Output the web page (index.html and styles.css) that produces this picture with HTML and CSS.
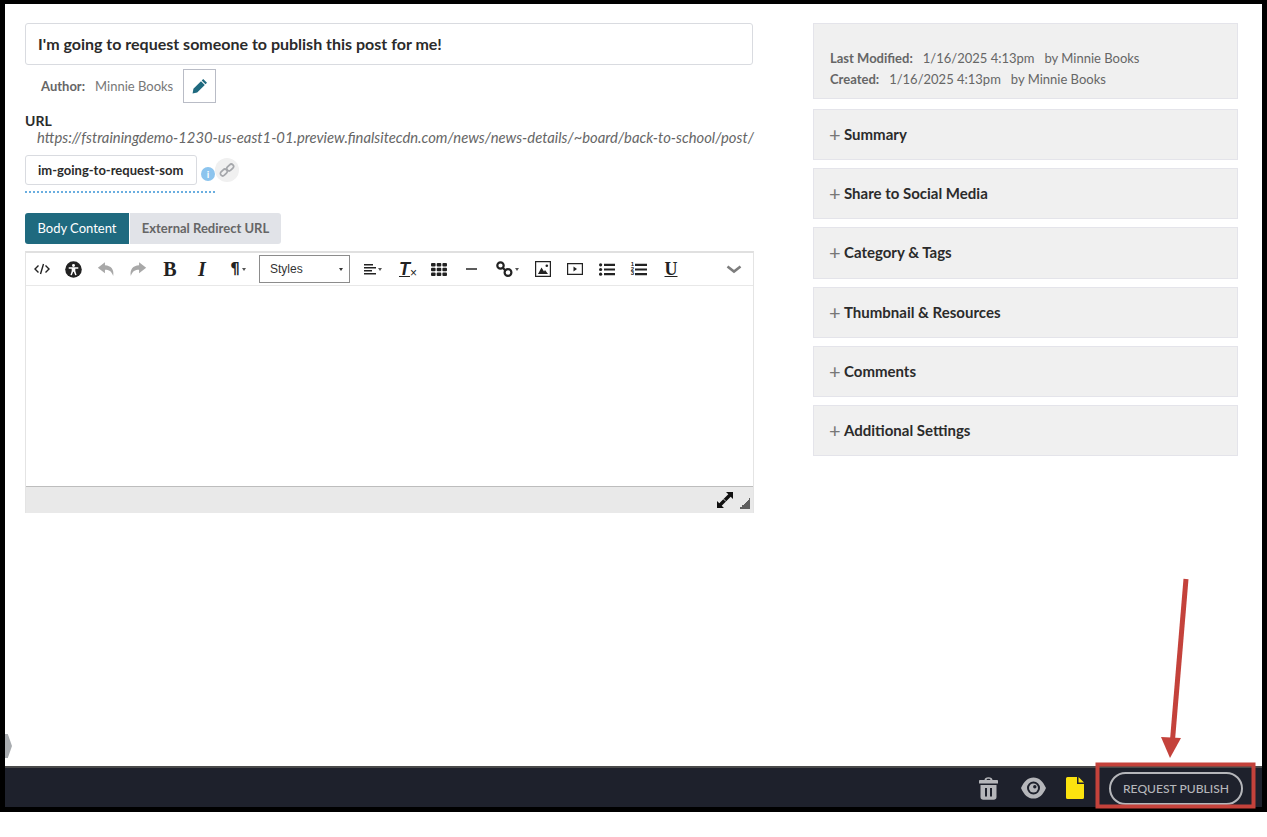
FILE: index.html
```html
<!DOCTYPE html>
<html lang="en">
<head>
<meta charset="utf-8">
<title>Post editor</title>
<link rel="stylesheet" href="styles.css">
</head>
<body>
<div class="frame">
  <main class="content">
    <section class="left">
      <div class="title-box">I'm going to request someone to publish this post for me!</div>
      <div class="author-row">
        <span class="author-label">Author:</span>
        <span class="author-name">Minnie Books</span>
        <button class="pencil-btn" aria-label="Edit author">
          <svg width="16" height="16" viewBox="0 0 16 16"><path fill="#1f6a7f" d="M11.2 1l3.800 3.800-1.500 1.500-3.800-3.800zM9 3.200l3.800 3.800-7.600 7.600L.6 15.400l.8-4.600z"/></svg>
        </button>
      </div>
      <div class="url-label">URL</div>
      <div class="url-text">https://fstrainingdemo-1230-us-east1-01.preview.finalsitecdn.com/news/news-details/~board/back-to-school/post/</div>
      <div class="slug-row">
        <div class="slug-box">im-going-to-request-som</div>
        <span class="info-dot">i</span>
        <span class="link-dot">
          <svg width="16" height="16" viewBox="0 0 16 16" fill="none" stroke="#a5a7ab" stroke-width="1.700"><rect x="1" y="8.200" width="7.600" height="4.600" rx="2.300" transform="rotate(-45 4.800 10.500)"/><rect x="7.400" y="3.200" width="7.600" height="4.600" rx="2.300" transform="rotate(-45 11.200 5.500)"/></svg>
        </span>
      </div>
      <div class="dotted"></div>
      <div class="tabs">
        <div class="tab tab-active">Body Content</div>
        <div class="tab tab-idle">External Redirect URL</div>
      </div>
      <div class="editor">
        <div class="toolbar">
          <span class="tool"><svg width="16" height="12" viewBox="0 0 16 12" fill="none" stroke="#222" stroke-width="1.400"><path d="M4.500 2.500L1 6l3.500 3.500M11.500 2.500L15 6l-3.500 3.500M9.500 1L6.500 11"/></svg></span>
          <span class="tool tool-a11y"><svg width="17" height="17" viewBox="0 0 16 16"><circle cx="8" cy="8" r="7.800" fill="#222"/><circle cx="8" cy="4.200" r="1.400" fill="#fff"/><path fill="#fff" d="M3.500 5.900h9v1.400H9.700v2.200l1.200 3.600-1.300.4L8.300 10h-.6l-1.300 3.500-1.300-.4 1.200-3.600V7.300H3.500z"/></svg></span>
          <span class="tool"><svg width="18" height="16" viewBox="0 0 17 14"><path fill="#a8a8a8" d="M7.500 .6L.8 5.800l6.700 5.200V7.800c4 0 6 1.200 7.800 5.800 1.200-6-2-10-7.800-10.200z"/></svg></span>
          <span class="tool"><svg width="18" height="16" viewBox="0 0 17 14"><path fill="#a8a8a8" d="M9.500 .6l6.700 5.200L9.500 11V7.800c-4 0-6 1.200-7.800 5.800C.5 7.600 3.700 3.600 9.500 3.400z"/></svg></span>
          <span class="tool glyph-b">B</span>
          <span class="tool glyph-i">I</span>
          <span class="tool tool-wide glyph-p">¶<i class="caret"></i></span>
          <div class="styles-select"><span>Styles</span><i class="caret caret-dark"></i></div>
          <span class="tool tool-align"><svg width="12" height="11" viewBox="0 0 12 11" fill="#222"><path d="M0 0h9v1.500H0zM0 3h12v1.500H0zM0 6h8v1.500H0zM0 9h12v1.500H0z"/></svg><i class="caret"></i></span>
          <span class="tool glyph-tx"><span class="tx-t">T</span><span class="tx-x">×</span></span>
          <span class="tool"><svg width="16" height="13" viewBox="0 0 16 13" fill="#222"><rect width="4.600" height="3.600" rx="1"/><rect x="5.700" width="4.600" height="3.600" rx="1"/><rect x="11.400" width="4.600" height="3.600" rx="1"/><rect y="4.700" width="4.600" height="3.600" rx="1"/><rect x="5.700" y="4.700" width="4.600" height="3.600" rx="1"/><rect x="11.400" y="4.700" width="4.600" height="3.600" rx="1"/><rect y="9.400" width="4.600" height="3.600" rx="1"/><rect x="5.700" y="9.400" width="4.600" height="3.600" rx="1"/><rect x="11.400" y="9.400" width="4.600" height="3.600" rx="1"/></svg></span>
          <span class="tool"><svg width="11" height="2" viewBox="0 0 11 2"><path fill="#333" d="M0 .2h11v1.600H0z"/></svg></span>
          <span class="tool tool-link"><svg width="17" height="16" viewBox="0 0 17 16" fill="none" stroke="#222" stroke-width="2.200"><circle cx="4.500" cy="4.500" r="3.200"/><circle cx="12" cy="11.500" r="3.400"/><path d="M6.500 6.500l3.500 3.500"/></svg><i class="caret"></i></span>
          <span class="tool"><svg width="16" height="16" viewBox="0 0 16 16"><path fill="#222" fill-rule="evenodd" d="M0 0h16v16H0zM1.200 1.200v13.600h13.600V1.200z"/><path fill="#222" d="M3 13l3.500-6.500L9 10.500l1-1.500 3 4z"/><circle cx="11.800" cy="4.800" r="1.300" fill="#222"/></svg></span>
          <span class="tool"><svg width="16" height="12" viewBox="0 0 16 12"><path fill="#222" fill-rule="evenodd" d="M0 0h16v12H0zM1.200 1.200v9.600h13.600V1.200z"/><path fill="#222" d="M6.500 3.500L10 6l-3.500 2.500z"/></svg></span>
          <span class="tool"><svg width="16" height="13" viewBox="0 0 16 13" fill="#222"><circle cx="1.600" cy="1.800" r="1.600"/><circle cx="1.600" cy="6.500" r="1.600"/><circle cx="1.600" cy="11.200" r="1.600"/><path d="M5 .7h11v2.200H5zM5 5.400h11v2.200H5zM5 10.100h11v2.200H5z"/></svg></span>
          <span class="tool ol-tool"><span class="ol-nums">1<br>2<br>3</span><svg width="12" height="13" viewBox="0 0 12 13" fill="#222"><path d="M0 .7h12v2.200H0zM0 5.400h12v2.200H0zM0 10.100h12v2.200H0z"/></svg></span>
          <span class="tool glyph-u">U</span>
          <span class="tool tool-end"><svg width="16" height="9" viewBox="0 0 16 9"><path fill="none" stroke="#7d7d7d" stroke-width="2.600" d="M1.500 1.500L8 6.500l6.500-5"/></svg></span>
        </div>
        <div class="editor-body"></div>
        <div class="statusbar">
          <svg class="expand" width="16" height="16" viewBox="0 0 16 16"><path fill="#111" d="M9 0h7v7l-2.300-2.300-9 9L7 16H0V9l2.300 2.300 9-9z"/><path stroke="#e9e9e9" stroke-width=".8" d="M6.500 7l2.500 2.500"/></svg>
          <i class="grip"></i>
        </div>
      </div>
    </section>
    <aside class="right">
      <div class="meta-panel">
        <div class="meta-line"><b>Last Modified:</b><span>1/16/2025 4:13pm</span><span>by Minnie Books</span></div>
        <div class="meta-line"><b>Created:</b><span>1/16/2025 4:13pm</span><span>by Minnie Books</span></div>
      </div>
      <div class="panel"><span class="plus">+</span>Summary</div>
      <div class="panel"><span class="plus">+</span>Share to Social Media</div>
      <div class="panel"><span class="plus">+</span>Category &amp; Tags</div>
      <div class="panel"><span class="plus">+</span>Thumbnail &amp; Resources</div>
      <div class="panel"><span class="plus">+</span>Comments</div>
      <div class="panel"><span class="plus">+</span>Additional Settings</div>
    </aside>
  </main>
  <footer class="bar">
    <svg class="bar-trash" width="19" height="23" viewBox="0 0 19 23"><path fill="#b5b6ba" fill-rule="evenodd" d="M5.500 3C5.700 1.200 7 .2 9.500.2s3.800 1 4 2.800H18c.6 0 1 .5 1 1v2.500H0V4c0-.5.4-1 1-1zm2 0h4c-.1-.8-.8-1.200-2-1.200s-1.900.4-2 1.200zM1.500 8h16v12c0 1.700-1.100 2.800-2.800 2.800H4.300c-1.700 0-2.800-1.100-2.800-2.800zM6 11v8.500h2V11zm5 0v8.500h2V11z"/></svg>
    <svg class="bar-eye" width="25" height="22" viewBox="0 0 25 22"><path fill="#b5b6ba" fill-rule="evenodd" d="M0 11C3 4 7 .4 12.500 .4S22 4 25 11c-3 7-7 10.600-12.500 10.600S3 18 0 11zm12.500-6.500a6.500 6.500 0 100 13 6.500 6.500 0 000-13z"/><circle cx="12.500" cy="11" r="4.500" fill="#b5b6ba"/><circle cx="13.800" cy="9.800" r="1.700" fill="#1e212c"/></svg>
    <svg class="bar-file" width="18" height="22" viewBox="0 0 18 22"><path fill="#fbe30f" d="M1.500 0H11v7h7v13.500a1.500 1.500 0 01-1.500 1.500h-15A1.500 1.500 0 010 20.500v-19A1.500 1.500 0 011.500 0zM12.500 0L18 5.500h-5.500z"/></svg>
    <button class="publish">REQUEST PUBLISH</button>
  </footer>
  <i class="handle"></i>
</div>
<svg class="annotation" width="1267" height="837" viewBox="0 0 1267 837" aria-hidden="true">
  <rect x="1097.500" y="764.500" width="156" height="42" fill="none" stroke="#c4423b" stroke-width="4"/>
  <path d="M1186 579L1172.500 740" stroke="#c4423b" stroke-width="5" fill="none"/>
  <path d="M1161 737L1181 738L1170 758z" fill="#c4423b"/>
</svg>
</body>
</html>
```
FILE: styles.css
```css
* { box-sizing: border-box; }
html, body { margin: 0; padding: 0; background: #fff; }
body { width: 1267px; height: 837px; overflow: hidden; position: relative; font-family: Lato, "Liberation Sans", sans-serif; color: #222; }
.frame { width: 1267px; height: 812px; border: solid #000; border-width: 4px 5px 5px 5px; display: flex; flex-direction: column; position: relative; background: #fff; }
.content { flex: 1; display: flex; padding: 19px 24px 0 20px; min-height: 0; }
.left { width: 728px; display: flex; flex-direction: column; }
.right { width: 425px; margin-left: 60px; display: flex; flex-direction: column; }

.title-box { height: 42px; border: 1px solid #d9dbe0; border-radius: 3px; padding: 0 12px 2px; display: flex; align-items: center; font-size: 16px; font-weight: 700; color: #2b2b2b; }
.author-row { display: flex; align-items: center; height: 34px; margin-top: 4px; padding-left: 16px; font-size: 13px; }
.author-label { font-weight: 700; color: #666; }
.author-name { margin-left: 10px; color: #777; }
.pencil-btn { width: 33px; height: 34px; margin-left: 10px; border: 1px solid #b9bcc6; background: #fff; padding: 0; display: flex; align-items: center; justify-content: center; }
.url-label { margin-top: 9px; font-size: 14px; font-weight: 700; line-height: 17px; color: #2b2b2b; }
.url-text { font-size: 14.800px; font-style: italic; line-height: 16px; color: #666; padding-left: 12px; white-space: nowrap; }
.slug-row { display: flex; margin-top: 10px; height: 30px; position: relative; }
.slug-box { width: 172px; height: 30px; border: 1px solid #d9dbe0; border-radius: 3px; padding-left: 12px; display: flex; align-items: center; font-size: 13px; font-weight: 700; color: #2b2b2b; }
.info-dot { width: 14px; height: 14px; border-radius: 50%; background: #8cc4ee; color: #fff; font-size: 10px; font-weight: 700; text-align: center; line-height: 14px; margin: 12px 0 0 4px; }
.link-dot { width: 24px; height: 24px; border-radius: 50%; background: #f0f0f0; display: flex; align-items: center; justify-content: center; margin: 3px 0 0 0; }
.dotted { width: 190px; margin-top: 6px; height: 2px; border-top: 2px dotted #6aaee0; }
.tabs { display: flex; margin-top: 20px; height: 31px; font-size: 13px; }
.tab { display: flex; align-items: center; padding-bottom: 2px; }
.tab-active { width: 104px; justify-content: center; background: #1f6a7f; color: #fff; border-radius: 3px 0 0 3px; }
.tab-idle { width: 152px; justify-content: center; background: #e1e3e8; color: #666; font-weight: 700; border-radius: 0 3px 3px 0; border-left: 1px solid #fff; }

.editor { margin-top: 7px; width: 729px; height: 262px; display: flex; flex-direction: column; border: 1px solid #e4e4e4; border-top: 2px solid #e0e0e0; border-bottom: 0; }
.toolbar { height: 33px; display: flex; align-items: center; border-bottom: 1px solid #e8e8e8; flex: none; }
.tool { width: 32px; height: 32px; flex: none; display: flex; align-items: center; justify-content: center; position: relative; color: #222; }
.tool-a11y { padding-right: 1px; }
.tool-wide { width: 38px; padding-left: 2px; }
.tool-align { width: 37px; margin-left: 4px; }
.tool-link { width: 39px; margin-left: 1px; }
.tool-end { margin-left: auto; margin-right: 3px; }
.caret { display: inline-block; width: 0; height: 0; border: 2.500px solid transparent; border-top: 3px solid #555; border-bottom: 0; margin-left: 2px; }
.caret-dark { border-top-color: #333; margin-left: 0; }
.glyph-b { font: 700 20px "Liberation Serif", serif; }
.glyph-i { font: italic 700 20px "Liberation Serif", serif; }
.glyph-p { font: 700 15px "DejaVu Sans", sans-serif; }
.glyph-u { font: 700 18px "Liberation Serif", serif; text-decoration: underline; }
.glyph-tx { font-family: "Liberation Sans", sans-serif; padding-left: 2px; }
.tx-t { font-size: 18px; font-weight: 700; font-style: italic; text-decoration: underline; }
.tx-x { font-size: 12px; align-self: flex-end; margin: 0 0 5px 0; }
.ol-tool { gap: 1px; }
.ol-nums { font: 700 6px/4.700px "Liberation Sans", sans-serif; }
.styles-select { width: 91px; height: 28px; margin-left: 3px; border: 1px solid #8c8c8c; display: flex; align-items: center; justify-content: space-between; padding: 0 6px 0 10px; font: 12px "Liberation Sans", sans-serif; color: #333; flex: none; }
.editor-body { flex: 1; background: #fff; }
.statusbar { height: 27px; flex: none; background: #e9e9e9; border-top: 1px solid #bdbdbd; position: relative; display: flex; align-items: center; justify-content: flex-end; padding-right: 3px; gap: 6px; }
.grip { width: 11px; height: 11px; background: linear-gradient(135deg, transparent 50%, #5f5f5f 50%); margin-top: 6px; }

.meta-panel { height: 76px; background: #f0f0f0; border: 1px solid #e4e4ea; padding-top: 24px; padding-left: 16px; font-size: 13px; color: #666; }
.meta-line { display: flex; gap: 10px; line-height: 21px; }
.meta-line b { color: #666; }
.panel { height: 51.200px; background: #f0f0f0; border: 1px solid #e4e4ea; margin-top: 8px; display: flex; align-items: center; padding: 0 0 1px 15px; font-size: 15px; font-weight: 700; color: #2b2b2b; }
.meta-panel + .panel { margin-top: 10px; }
.plus { font-weight: 400; font-size: 20px; color: #777; width: 15px; line-height: 1; }

.bar { height: 41px; flex: none; background: #1e212c; border-top: 2px solid #4a4a4a; display: flex; align-items: center; padding: 1px 19px 0 0; justify-content: flex-end; }
.bar-trash { margin-right: 23px; }
.bar-eye { margin-right: 20px; }
.bar-file { margin-right: 25px; }
.publish { width: 134px; height: 33px; border: 2px solid #b5b6ba; border-radius: 17px; background: transparent; color: #b5b6ba; font: 500 12.100px Lato, "Liberation Sans", sans-serif; padding: 0; }
.handle { position: absolute; left: 0; bottom: 49px; width: 7px; height: 24px; background: #a9acb0; clip-path: polygon(0 0, 40% 0, 100% 50%, 40% 100%, 0 100%); }
.annotation { position: absolute; left: 0; top: 0; pointer-events: none; }
```
